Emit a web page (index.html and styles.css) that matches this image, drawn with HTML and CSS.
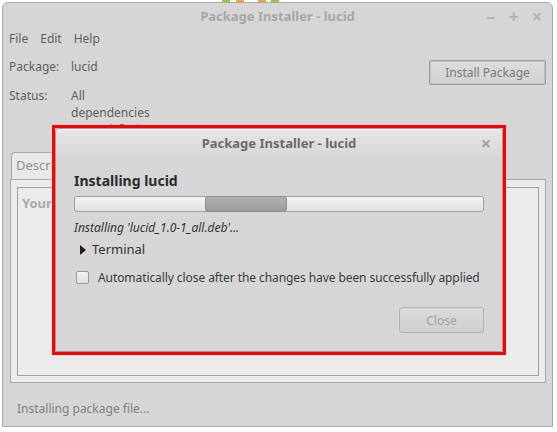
FILE: index.html
```html
<!DOCTYPE html>
<html lang="en">
<head>
    <meta charset="UTF-8">
    <meta name="viewport" content="width=device-width, initial-scale=1.0">
    <title>Package Installer - lucid</title>
    <link rel="stylesheet" href="styles.css">
</head>
<body>
    <!-- bits of the desktop panel peeking out above the window -->
    <div class="desktop-bits">
        <span class="bit green b1"></span>
        <span class="bit orange b2"></span>
        <span class="bit orange b3"></span>
        <span class="bit green b4"></span>
    </div>

    <div class="window">
        <div class="titlebar">
            <span class="title">Package Installer - lucid</span>
            <div class="controls">
                <span>&#8211;</span>
                <span>+</span>
                <span>&#215;</span>
            </div>
        </div>

        <div class="menubar">
            <span>File</span>
            <span>Edit</span>
            <span>Help</span>
        </div>

        <div class="info">
            <div class="fields">
                <div class="row">
                    <span class="label">Package:</span>
                    <span>lucid</span>
                </div>
                <div class="row status-row">
                    <span class="label">Status:</span>
                    <span class="status">All<br>dependencies<br>are satisfied</span>
                </div>
            </div>
            <button class="install">Install Package</button>
        </div>

        <div class="notebook">
            <div class="tabs">
                <div class="tab">Description</div>
            </div>
            <div class="page">
                <div class="frame">
                    <span class="heading">Your</span>
                </div>
            </div>
        </div>

        <div class="statusbar">Installing package file...</div>

        <!-- progress dialog, highlighted in red -->
        <div class="highlight">
            <div class="dialog">
                <div class="dialog-title">
                    <span class="title">Package Installer - lucid</span>
                    <span class="dialog-close">&#215;</span>
                </div>
                <div class="dialog-body">
                    <div class="dialog-heading">Installing lucid</div>
                    <div class="progress">
                        <div class="pulse"></div>
                    </div>
                    <div class="progress-text">Installing 'lucid_1.0-1_all.deb'...</div>
                    <div class="expander">
                        <span class="arrow"></span>
                        <span>Terminal</span>
                    </div>
                    <label class="check">
                        <span class="box"></span>
                        <span>Automatically close after the changes have been successfully applied</span>
                    </label>
                    <div class="dialog-actions">
                        <button class="close-btn">Close</button>
                    </div>
                </div>
            </div>
        </div>
    </div>
</body>
</html>
```

FILE: styles.css
```css
body {
    margin: 0;
    background-color: white;
    font-family: "Noto Sans", "DejaVu Sans", sans-serif;
    font-size: 12px;
}
.desktop-bits {
    height: 2px;
    display: flex;
}
.bit {
    height: 2px;
    width: 8px;
}
.green {
    background-color: #98c83e;
}
.orange {
    background-color: #f2a833;
}
.b1 { margin-left: 222px; }
.b2 { margin-left: 6px; }
.b3 { margin-left: 14px; }
.b4 { margin-left: 5px; }

.window {
    position: relative;
    margin-left: 2px;
    width: 551px;
    height: 425px;
    box-sizing: border-box;
    border: 1px solid #a9a9a9;
    border-radius: 6px 6px 0 0;
    background-color: #d6d6d6;
    color: #5e5e5e;
    display: flex;
    flex-direction: column;
}
.titlebar {
    height: 26px;
    display: flex;
    align-items: center;
    justify-content: center;
    position: relative;
}
.title {
    font-weight: bold;
    font-size: 13px;
    color: #a6a6a6;
}
.controls {
    position: absolute;
    right: 10px;
    top: 0;
    height: 26px;
    display: flex;
    align-items: center;
    gap: 13px;
    color: #b4b4b4;
    font-size: 18px;
    font-weight: bold;
}
.menubar {
    height: 20px;
    line-height: 20px;
    display: flex;
    gap: 12px;
    padding-left: 6px;
    font-size: 12px;
}
.info {
    display: flex;
    justify-content: space-between;
    align-items: flex-start;
    padding: 9px 6px 0 6px;
}
.row {
    display: flex;
    line-height: 17px;
    font-size: 12px;
}
.status-row {
    margin-top: 12px;
}
.label {
    width: 62px;
}
.install {
    margin-top: 2px;
    width: 117px;
    height: 25px;
    font-family: inherit;
    font-size: 12px;
    color: #7a7a7a;
    background: linear-gradient(#dcdcdc, #d2d2d2);
    border: 1px solid #9c9c9c;
    border-radius: 2px;
    box-shadow: inset 0 0 0 1px #c4c4c4;
}
.notebook {
    margin: 14px 6px 0 7px;
}
.tabs {
    display: flex;
}
.tab {
    height: 26px;
    line-height: 24px;
    padding: 0 6px 0 4px;
    margin-left: 1px;
    background-color: #e8e8e8;
    border: 1px solid #a8a8a8;
    border-bottom: none;
    border-radius: 4px 4px 0 0;
    color: #909090;
    font-size: 13px;
}
.page {
    height: 204px;
    box-sizing: border-box;
    padding: 7px 6px 6px 6px;
    background-color: #ebebeb;
    border: 1px solid #a8a8a8;
}
.frame {
    height: 100%;
    box-sizing: border-box;
    border: 1px solid #a0a0a0;
    padding: 6px 4px;
}
.heading {
    font-weight: bold;
    font-size: 13px;
    color: #a8a8a8;
}
.statusbar {
    padding: 17px 0 0 14px;
    color: #808080;
    font-size: 12px;
}

.highlight {
    position: absolute;
    left: 49px;
    top: 122px;
    width: 454px;
    height: 230px;
    box-sizing: border-box;
    border: 3px solid #ff0000;
}
.dialog {
    height: 100%;
    box-sizing: border-box;
    border: 1px solid #9a9a9a;
    border-radius: 4px 4px 0 0;
    background-color: #d6d6d6;
    color: #333333;
    display: flex;
    flex-direction: column;
}
.dialog-title {
    height: 27px;
    display: flex;
    align-items: center;
    justify-content: center;
    position: relative;
    border-radius: 4px 4px 0 0;
    background: linear-gradient(#e6e6e6, #d8d8d8);
    box-shadow: inset 0 1px 0 #f6f6f6;
}
.dialog-title .title {
    color: #6a6a6a;
}
.dialog-close {
    position: absolute;
    right: 11px;
    top: 2px;
    font-size: 18px;
    font-weight: bold;
    color: #a0a0a0;
}
.dialog-body {
    flex: 1;
    display: flex;
    flex-direction: column;
    padding: 15px 18px 18px 18px;
}
.dialog-heading {
    font-weight: bold;
    font-size: 14px;
    line-height: 20px;
    color: #2b2b2b;
}
.progress {
    margin-top: 5px;
    height: 16px;
    box-sizing: border-box;
    border: 1px solid #a2a2a2;
    border-radius: 3px;
    background: linear-gradient(#f4f4f4, #e0e0e0);
    position: relative;
}
.pulse {
    position: absolute;
    left: 130px;
    top: -1px;
    width: 82px;
    height: 16px;
    box-sizing: border-box;
    border: 1px solid #8c8c8c;
    border-radius: 3px;
    background: linear-gradient(#b0b0b0, #9c9c9c);
}
.progress-text {
    margin-top: 7px;
    line-height: 17px;
    font-style: italic;
}
.expander {
    margin-top: 5px;
    line-height: 17px;
    display: flex;
    align-items: center;
    font-size: 13px;
}
.arrow {
    width: 0;
    height: 0;
    margin: 0 6px 0 6px;
    border-left: 6px solid #1e1e1e;
    border-top: 5px solid transparent;
    border-bottom: 5px solid transparent;
}
.check {
    margin-top: 11px;
    line-height: 17px;
    display: flex;
    align-items: center;
    gap: 9px;
    color: #3a3a3a;
    white-space: nowrap;
    letter-spacing: -0.08px;
}
.box {
    width: 13px;
    height: 13px;
    margin-left: 2px;
    flex-shrink: 0;
    box-sizing: border-box;
    border: 1px solid #9a9a9a;
    border-radius: 2px;
    background: linear-gradient(#f0f0f0, #e2e2e2);
}
.dialog-actions {
    margin-top: auto;
    display: flex;
    justify-content: flex-end;
}
.close-btn {
    width: 85px;
    height: 26px;
    font-family: inherit;
    font-size: 12px;
    color: #a2a2a2;
    background: linear-gradient(#dadada, #d0d0d0);
    border: 1px solid #b2b2b2;
    border-radius: 3px;
}
```
